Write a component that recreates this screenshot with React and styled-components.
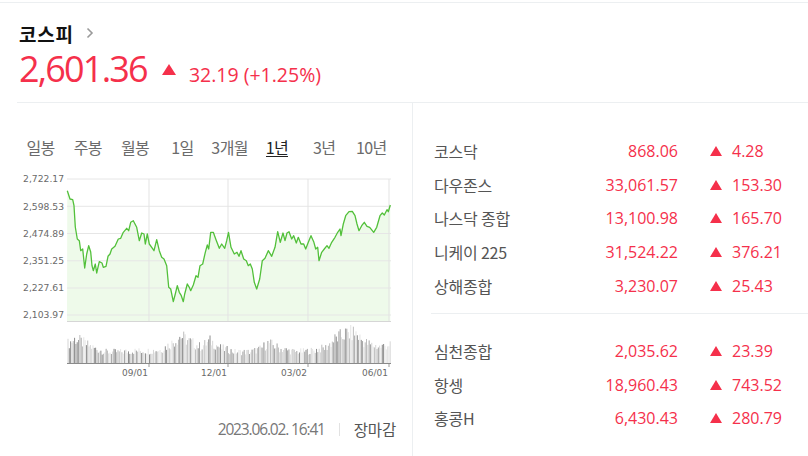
import React from 'react'
import styled, { createGlobalStyle } from 'styled-components'

const GlobalStyle = createGlobalStyle`
    html, body { margin: 0; padding: 0; background: #fff; }
    body { font-family: "Open Sans", "Noto Sans CJK KR", sans-serif; }
`

const RED = '#f5304b'

const Page = styled.div`
    width: 808px;
    height: 456px;
    margin-top: 2px;
    border-top: 1px solid #eceff1;
    box-sizing: border-box;
    padding-left: 17px;
    overflow: hidden;
    background: #fff;
`

const Header = styled.header`
    height: 100px;
    border-bottom: 1px solid #eceff1;
    padding: 17px 0 0 2px;
    box-sizing: border-box;
`

const TitleRow = styled.div`
    display: flex;
    align-items: center;
    gap: 12px;
    height: 26px;
`

const Title = styled.h1`
    margin: 0;
    font-family: "Noto Sans CJK KR", sans-serif;
    font-size: 19px;
    font-weight: 700;
    color: #111;
    letter-spacing: 0.8px;
`

const PriceRow = styled.div`
    display: flex;
    align-items: baseline;
    height: 46px;
    color: ${ RED };
`

const Price = styled.span`
    font-size: 36px;
    letter-spacing: -1.8px;
    line-height: 46px;
`

const Triangle = styled.span`
    display: inline-block;
    width: 0;
    height: 0;
    border-left: ${ p => p.size / 2 }px solid transparent;
    border-right: ${ p => p.size / 2 }px solid transparent;
    border-bottom: ${ p => p.h }px solid ${ RED };
`

const Change = styled.span`
    font-size: 19.5px;
    margin-left: 13px;
`

const Body = styled.div`
    display: grid;
    grid-template-columns: 396px 1fr;
    height: 353px;
`

const LeftCol = styled.section`
    border-right: 1px solid #eceff1;
    padding-top: 32px;
`

const Tabs = styled.ul`
    display: grid;
    grid-template-columns: repeat(8, 47.25px);
    margin: 0;
    padding: 0;
    list-style: none;
`

const Tab = styled.li`
    text-align: center;
    font-family: "Noto Sans CJK KR", sans-serif;
    font-size: 16px;
    line-height: 24px;
    letter-spacing: -0.6px;
    color: ${ p => p.active ? '#222' : '#6b6b6b' };
    span {
        border-bottom: ${ p => p.active ? '1.5px solid #222' : 'none' };
        line-height: 17px;
        display: inline-block;
    }
`

const ChartSvg = styled.svg`
    display: block;
    margin-top: 10px;
`

const Footer = styled.div`
    display: flex;
    justify-content: flex-end;
    align-items: center;
    gap: 14px;
    margin-top: 35px;
    padding-right: 16px;
    height: 20px;
`

const Stamp = styled.span`
    font-size: 15.5px;
    letter-spacing: -1.15px;
    color: #777;
`

const Sep = styled.span`
    width: 1px;
    height: 13px;
    background: #e2e2e2;
`

const Status = styled.span`
    font-family: "Noto Sans CJK KR", sans-serif;
    font-size: 15.5px;
    letter-spacing: -0.2px;
    color: #555;
`

const RightCol = styled.section`
    padding-top: 31px;
    padding-left: 18px;
`

const Group = styled.div`
    padding-bottom: ${ p => p.last ? 0 : 10 }px;
    padding-top: ${ p => p.last ? 20 : 0 }px;
    border-bottom: ${ p => p.last ? 'none' : '1px solid #eceff1' };
`

const Row = styled.div`
    display: grid;
    grid-template-columns: 120px 127px 32px 13px auto;
    align-items: center;
    height: 33.8px;
    font-size: 16px;
`

const Name = styled.span`
    padding-left: 3px;
    font-family: "Noto Sans CJK KR", sans-serif;
    letter-spacing: -0.2px;
    color: #555;
`

const Value = styled.span`
    grid-column: 2;
    text-align: right;
    color: ${ RED };
`

const Delta = styled.span`
    margin-left: 9px;
    color: ${ RED };
`

const TriCell = styled.span`
    grid-column: 4;
    display: flex;
    align-items: center;
`

const linePts = [
    [67.3,191.7],[70,200],[72.7,200.7],[74,206.7],[75.3,228],[77.3,240],[79.3,241.7],[80.7,251.7],[82.7,250],
    [84.7,269],[86.7,255],[88.7,246.7],[90.7,253],[92,266.7],[93.3,271.7],[95.3,265],[96.7,274],[99.3,262.7],
    [102,264],[103.3,268.3],[106,267.3],[108,257.3],[110,255],[111.7,250],[115,247.3],[118.3,240],[120.7,239.3],
    [123.3,233.3],[126.7,229.3],[128.7,231.7],[130.7,223.3],[133.3,221.7],[136.7,228.3],[139.3,241.7],[141.7,234],
    [144,235],[145.3,245],[147.3,235],[149.3,245],[151.7,248.3],[154,251.7],[156.7,240.7],[159.3,251.7],
    [161.7,258.3],[164,260],[166.7,266.7],[168.7,288.3],[170.7,290],[173.3,302.7],[175.3,295],[177.3,286.7],
    [179.3,293.3],[181.3,296.7],[183.3,302.7],[184.7,295],[187.3,285],[189.3,288.3],[190.7,291.7],[193.3,286],
    [196,276.7],[198,278.3],[200,266.7],[202.7,265],[205.3,253.3],[207.3,246],[208.7,250],[210.7,233.3],
    [213.3,233.3],[216,240.7],[219.3,249.3],[221.7,245],[224.7,249.3],[226.7,241.7],[228.5,233.3],[231,248.3],
    [234.3,255],[237,253.3],[239,257.3],[241,251.7],[243.7,260],[246.3,261.7],[248.3,266.7],[250.3,265],
    [252.3,270],[254.3,283.3],[256.7,290],[259.7,280],[262.3,261.7],[265,259.3],[268.3,251.7],[271.7,257.3],
    [275,248.3],[277.7,232.7],[280.3,243.3],[283,234],[285,241.7],[287,234],[289,232.7],[291.7,240],[293.7,236.7],
    [296.3,244],[298.3,238.3],[301,245],[303.7,245],[305.7,250],[308.3,243.3],[311,236.7],[313.7,242.7],
    [315.7,250],[317.7,248.3],[319,261.7],[321.7,253.3],[324.3,250],[327,246.7],[329,249.3],[331.7,243.3],
    [335,238.3],[337.7,233.3],[340,230],[341,236.7],[343.3,225],[345.7,216.7],[349,212.7],[352.3,212.3],
    [355,216.7],[357,225],[359,231.7],[361.7,226.7],[364.3,223.3],[367,227.3],[369.7,228.3],[373.7,233.3],
    [376.7,228.3],[380,216.7],[382.3,214],[384.3,216],[387,210.7],[388.3,212.7],[390.3,206],
]

const volProfile = [
    [67,19],[75,24],[85,19],[95,14],[105,11],[120,11],[135,12],[148,12],[160,13],[172,20],[180,27],[188,22],
    [200,16],[210,22],[220,15],[235,11],[250,11],[260,14],[268,20],[280,14],[295,11],[310,12],[325,15],
    [335,24],[345,29],[355,30],[362,22],[370,18],[380,16],[390,19],
]

const profileAt = x => {
    for (let i = 1; i < volProfile.length; i++) {
        const [x1, y1] = volProfile[i]
        const [x0, y0] = volProfile[i - 1]
        if (x <= x1) return y0 + (y1 - y0) * (x - x0) / (x1 - x0)
    }
    return volProfile[volProfile.length - 1][1]
}

const hash = n => {
    const s = Math.sin(n * 12.9898) * 43758.5453
    return s - Math.floor(s)
}

const shades = ['#8c8c8c', '#a4a4a4', '#bdbdbd', '#d6d6d6', '#e4e4e4']

const volBars = Array.from({ length: 246 }, (_, i) => {
    const x = 67.5 + i * 1.315
    const h = profileAt(x) * (0.7 + hash(i + 1) * 0.6)
    return { x, h: Math.min(h, 38), c: shades[Math.floor(hash(i + 77) * shades.length)] }
})

const yLabels = [
    ['2,722.17', 180], ['2,598.53', 207.3], ['2,474.89', 234.5],
    ['2,351.25', 261.8], ['2,227.61', 289], ['2,103.97', 316],
]

const xLabels = [['09/01', 149], ['12/01', 228], ['03/02', 308], ['06/01', 389]]

const Chart = () => {
    const line = linePts.map(p => p.join(',')).join(' ')
    const area = `67,322 ${ line } 390.3,322`
    return (
        <ChartSvg width="396" height="215" viewBox="17 170 396 215">
            <polygon points={ area } fill="#eefaea" />
            { yLabels.map(([t, y]) => (
                <g key={ t }>
                    <line x1="67" x2="391" y1={ y } y2={ y } stroke="#e6e6e6" strokeWidth="1" />
                    <text x="64" y={ y + 3.3 } textAnchor="end" fontFamily="DejaVu Sans" fontSize="9.2" fill="#6a6a6a">{ t }</text>
                </g>
            )) }
            { xLabels.map(([t, x]) => (
                <g key={ t }>
                    <line x1={ x } x2={ x } y1="180" y2="322" stroke="#e3e3e3" strokeWidth="1" />
                    <line x1={ x } x2={ x } y1="364" y2="368" stroke="#999" strokeWidth="1" />
                    <text x={ x - 1 } y="377" textAnchor="end" fontFamily="DejaVu Sans" fontSize="9" fill="#6a6a6a">{ t }</text>
                </g>
            )) }
            <line x1="67" x2="391" y1="322.5" y2="322.5" stroke="#d6d6d6" strokeWidth="1" />
            <polyline points={ line } fill="none" stroke="#52c03a" strokeWidth="1.3" strokeLinejoin="round" />
            { volBars.map((b, i) => (
                <rect key={ i } x={ b.x } y={ 364 - b.h } width="1" height={ b.h } fill={ b.c } />
            )) }
            <line x1="67" x2="391" y1="364.5" y2="364.5" stroke="#8a8a8a" strokeWidth="1" />
        </ChartSvg>
    )
}

const tabs = ['일봉', '주봉', '월봉', '1일', '3개월', '1년', '3년', '10년']

const groups = [
    [
        ['코스닥', '868.06', '4.28'],
        ['다우존스', '33,061.57', '153.30'],
        ['나스닥 종합', '13,100.98', '165.70'],
        ['니케이 225', '31,524.22', '376.21'],
        ['상해종합', '3,230.07', '25.43'],
    ],
    [
        ['심천종합', '2,035.62', '23.39'],
        ['항셍', '18,960.43', '743.52'],
        ['홍콩H', '6,430.43', '280.79'],
    ],
]

const Chevron = () => (
    <svg width="8" height="12" viewBox="0 0 8 12">
        <path d="M1.5 1.5 L6 6 L1.5 10.5" fill="none" stroke="#9a9a9a" strokeWidth="1.6" />
    </svg>
)

const App = () => (
    <Page>
        <GlobalStyle />
        <Header>
            <TitleRow>
                <Title>코스피</Title>
                <Chevron />
            </TitleRow>
            <PriceRow>
                <Price>2,601.36</Price>
                <Triangle size={ 14 } h={ 11 } style={ { marginLeft: 15, alignSelf: 'center' } } />
                <Change>32.19 (+1.25%)</Change>
            </PriceRow>
        </Header>
        <Body>
            <LeftCol>
                <Tabs>
                    { tabs.map(t => (
                        <Tab key={ t } active={ t === '1년' }><span>{ t }</span></Tab>
                    )) }
                </Tabs>
                <Chart />
                <Footer>
                    <Stamp>2023.06.02. 16:41</Stamp>
                    <Sep />
                    <Status>장마감</Status>
                </Footer>
            </LeftCol>
            <RightCol>
                { groups.map((rows, gi) => (
                    <Group key={ gi } last={ gi === groups.length - 1 }>
                        { rows.map(([name, value, delta]) => (
                            <Row key={ name }>
                                <Name>{ name }</Name>
                                <Value>{ value }</Value>
                                <TriCell><Triangle size={ 13 } h={ 10 } /></TriCell>
                                <Delta>{ delta }</Delta>
                            </Row>
                        )) }
                    </Group>
                )) }
            </RightCol>
        </Body>
    </Page>
)

export default App
